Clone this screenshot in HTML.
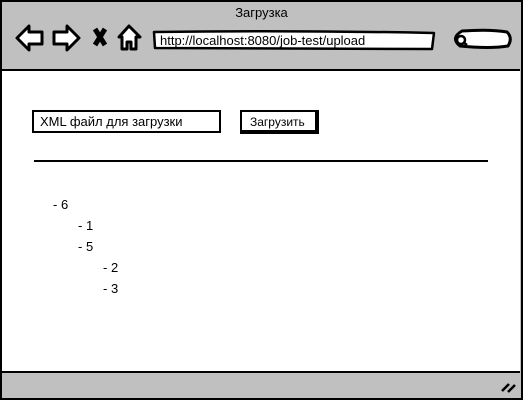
<!DOCTYPE html>
<html><head><meta charset="utf-8"><style>
*{margin:0;padding:0;box-sizing:border-box}
body{width:523px;height:400px;background:#fff;position:relative;overflow:hidden;font-family:"Liberation Sans","DejaVu Sans",sans-serif;color:#000}
.a{position:absolute}
</style></head><body>
<div class="a" style="left:0;top:0;width:523px;height:400px;border:2px solid #000;background:#c0c0c0"></div>
<div class="a" style="left:2px;top:69px;width:518px;height:304px;background:#fff;border-top:2px solid #000;border-bottom:2px solid #000"></div>
<div class="a" style="left:0;top:5px;width:523px;text-align:center;font-size:13px">Загрузка</div>
<svg class="a" style="left:0;top:0" width="523" height="70">
<g fill="#fff" stroke="#000" stroke-width="3" stroke-linejoin="round">
<path d="M17 38 L29 26 L29 32 L42 32 L42 44 L29 44 L29 50 Z"/>
<path d="M79 38 L67 26 L67 32 L54 32 L54 44 L67 44 L67 50 Z"/>
<path d="M119 37 L129 26 L140 37 L136 37 L136 49 L131 49 L131 42 L127 42 L127 49 L122 49 L122 37 Z"/>
<path d="M154 32 Q290 30 434 33 L432 49 Q290 48 155 48 Z" stroke-width="2.5"/>
<path d="M462 31 Q490 29 507 32 Q513 38 508 46 Q490 49 460 46 Q450 38 462 31 Z"/>
</g>
<path d="M95 29 L105 45 M105 29 L95 45" stroke="#000" stroke-width="5"/>
<circle cx="461" cy="40" r="4" fill="none" stroke="#000" stroke-width="2.5"/>
<path d="M463 42 L467 45" stroke="#000" stroke-width="2.5"/>
</svg>
<div class="a" style="left:160px;top:33px;font-size:13px">http://localhost:8080/job-test/upload</div>
<div class="a" style="left:32px;top:110px;width:189px;height:23px;border:2px solid #000;font-size:13px;padding:2px 0 0 6px">XML файл для загрузки</div>
<div class="a" style="left:240px;top:110px;width:79px;height:24px;border:2px solid #000;border-right-width:4px;border-bottom-width:4px;font-size:12px;padding:3px 0 0 8px">Загрузить</div>
<div class="a" style="left:34px;top:160px;width:454px;height:2px;background:#000"></div>
<div class="a" style="left:53px;top:197px;font-size:13px">- 6</div>
<div class="a" style="left:78px;top:218px;font-size:13px">- 1</div>
<div class="a" style="left:78px;top:239px;font-size:13px">- 5</div>
<div class="a" style="left:103px;top:260px;font-size:13px">- 2</div>
<div class="a" style="left:103px;top:281px;font-size:13px">- 3</div>
<svg class="a" style="left:500px;top:380px" width="18" height="14"><path d="M2 11 L9 4 M8 12 L15 5" stroke="#000" stroke-width="2.5"/></svg>
</body></html>
